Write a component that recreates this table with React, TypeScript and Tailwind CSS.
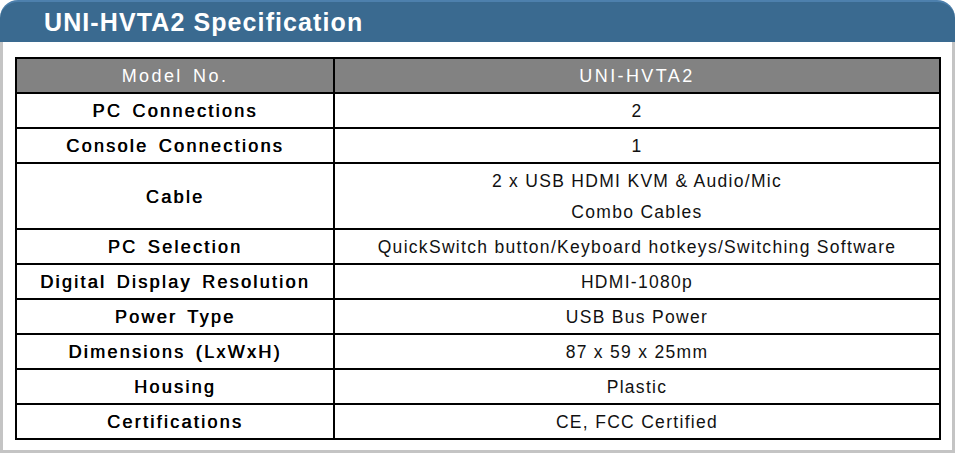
const rows: { label: string; value: string[] }[] = [
  { label: 'PC Connections', value: ['2'] },
  { label: 'Console Connections', value: ['1'] },
  { label: 'Cable', value: ['2 x USB HDMI KVM & Audio/Mic', 'Combo Cables'] },
  { label: 'PC Selection', value: ['QuickSwitch button/Keyboard hotkeys/Switching Software'] },
  { label: 'Digital Display Resolution', value: ['HDMI-1080p'] },
  { label: 'Power Type', value: ['USB Bus Power'] },
  { label: 'Dimensions (LxWxH)', value: ['87 x 59 x 25mm'] },
  { label: 'Housing', value: ['Plastic'] },
  { label: 'Certifications', value: ['CE, FCC Certified'] },
];

export default function App() {
  return (
    <div className="w-[955px] h-[454px] bg-white font-['Liberation_Sans',Arial,sans-serif]">
      <div className="w-[955px] h-[453px] flex flex-col">
        <div className="h-[42px] rounded-t-[18px] bg-[#3a6a90] border-t-2 border-[#4d80ad] flex items-center pl-[44px]">
          <h1 className="text-[25px] font-bold text-white tracking-[1.1px] leading-none">UNI-HVTA2 Specification</h1>
        </div>
        <div className="flex-1 border-x-[3px] border-b-[3px] border-[#c4c4c4] pl-[12px] pr-[12px] pt-[15px]">
          <table className="w-[926px] border-collapse border-2 border-black">
            <thead>
              <tr className="h-[35px] bg-[#828282] text-white">
                <th className="w-[318px] border-2 border-black pt-[2px] font-normal text-[18px] tracking-[2.4px] [word-spacing:3px]">Model No.</th>
                <th className="border-2 border-black pt-[2px] font-normal text-[18px] tracking-[2.4px]">UNI-HVTA2</th>
              </tr>
            </thead>
            <tbody>
              {rows.map((r) => (
                <tr key={r.label} className={r.value.length > 1 ? 'h-[65px]' : 'h-[35px]'}>
                  <td className="border-2 border-black pt-[2px] text-center text-[18px] tracking-[2.3px] [word-spacing:3px] text-black [text-shadow:0.6px_0_0_#000]">
                    {r.label}
                  </td>
                  <td className="border-2 border-black pt-[2px] text-center text-[17.5px] tracking-[1.3px] text-[#111]">
                    {r.value.map((v) => (
                      <div key={v} className="leading-[31px]">{v}</div>
                    ))}
                  </td>
                </tr>
              ))}
            </tbody>
          </table>
        </div>
      </div>
    </div>
  );
}
